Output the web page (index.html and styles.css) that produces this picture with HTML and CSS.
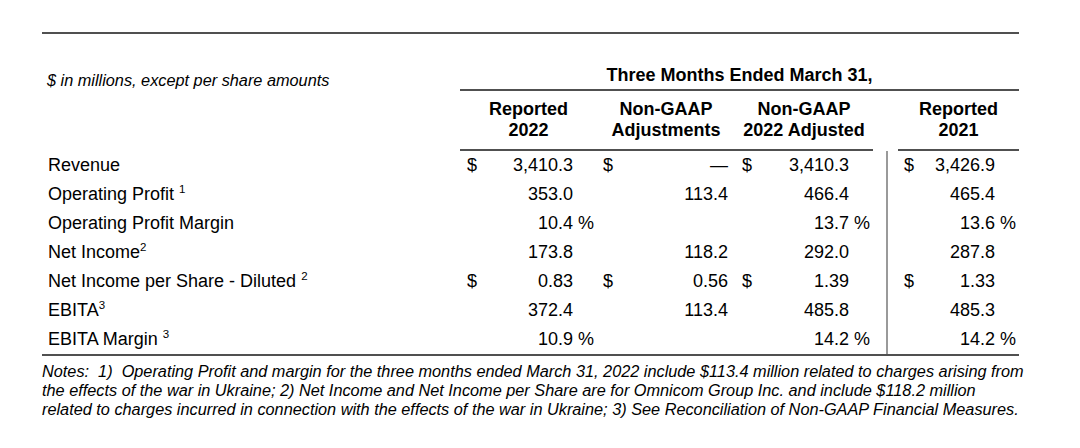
FILE: index.html
```html
<!DOCTYPE html>
<html>
<head>
<meta charset="utf-8">
<link rel="stylesheet" href="styles.css">
</head>
<body>
<div class="page">
  <div class="rule-top"></div>
  <div class="fin">
    <div class="units">$ in millions, except per share amounts</div>
    <div class="period">Three Months Ended March 31,</div>

    <div class="blank"></div>
    <div class="colhead">Reported<br>2022</div>
    <div class="colhead">Non-GAAP<br>Adjustments</div>
    <div class="colhead">Non-GAAP<br>2022 Adjusted</div>
    <div class="blank"></div>
    <div class="colhead last">Reported<br>2021</div>

    <div class="label">Revenue</div>
    <div class="num c1"><span class="cur">$</span><span class="val">3,410.3</span><span class="suf"></span></div>
    <div class="num c2"><span class="cur">$</span><span class="val">—</span><span class="suf"></span></div>
    <div class="num c3"><span class="cur">$</span><span class="val">3,410.3</span><span class="suf"></span></div>
    <div class="gap"></div>
    <div class="num c4"><span class="cur">$</span><span class="val">3,426.9</span><span class="suf"></span></div>

    <div class="label">Operating Profit <sup>1</sup></div>
    <div class="num c1"><span class="val">353.0</span><span class="suf"></span></div>
    <div class="num c2"><span class="val">113.4</span><span class="suf"></span></div>
    <div class="num c3"><span class="val">466.4</span><span class="suf"></span></div>
    <div class="gap"></div>
    <div class="num c4"><span class="val">465.4</span><span class="suf"></span></div>

    <div class="label">Operating Profit Margin</div>
    <div class="num c1"><span class="val">10.4</span><span class="suf">%</span></div>
    <div class="num c2"><span class="val"></span><span class="suf"></span></div>
    <div class="num c3"><span class="val">13.7</span><span class="suf">%</span></div>
    <div class="gap"></div>
    <div class="num c4"><span class="val">13.6</span><span class="suf">%</span></div>

    <div class="label">Net Income<sup>2</sup></div>
    <div class="num c1"><span class="val">173.8</span><span class="suf"></span></div>
    <div class="num c2"><span class="val">118.2</span><span class="suf"></span></div>
    <div class="num c3"><span class="val">292.0</span><span class="suf"></span></div>
    <div class="gap"></div>
    <div class="num c4"><span class="val">287.8</span><span class="suf"></span></div>

    <div class="label">Net Income per Share - Diluted <sup>2</sup></div>
    <div class="num c1"><span class="cur">$</span><span class="val">0.83</span><span class="suf"></span></div>
    <div class="num c2"><span class="cur">$</span><span class="val">0.56</span><span class="suf"></span></div>
    <div class="num c3"><span class="cur">$</span><span class="val">1.39</span><span class="suf"></span></div>
    <div class="gap"></div>
    <div class="num c4"><span class="cur">$</span><span class="val">1.33</span><span class="suf"></span></div>

    <div class="label">EBITA<sup>3</sup></div>
    <div class="num c1"><span class="val">372.4</span><span class="suf"></span></div>
    <div class="num c2"><span class="val">113.4</span><span class="suf"></span></div>
    <div class="num c3"><span class="val">485.8</span><span class="suf"></span></div>
    <div class="gap"></div>
    <div class="num c4"><span class="val">485.3</span><span class="suf"></span></div>

    <div class="label">EBITA Margin <sup>3</sup></div>
    <div class="num c1"><span class="val">10.9</span><span class="suf">%</span></div>
    <div class="num c2"><span class="val"></span><span class="suf"></span></div>
    <div class="num c3"><span class="val">14.2</span><span class="suf">%</span></div>
    <div class="gap"></div>
    <div class="num c4"><span class="val">14.2</span><span class="suf">%</span></div>
  </div>
  <div class="rule-bottom"></div>
  <p class="notes">Notes:&nbsp; 1)&nbsp; Operating Profit and margin for the three months ended March 31, 2022 include $113.4 million related to charges arising from the effects of the war in Ukraine; 2) Net Income and Net Income per Share are for Omnicom Group Inc. and include $118.2 million related to charges incurred in connection with the effects of the war in Ukraine; 3) See Reconciliation of Non-GAAP Financial Measures.</p>
</div>
</body>
</html>
```
FILE: styles.css
```css
* { box-sizing: border-box; }

html, body {
  margin: 0;
  padding: 0;
  background: #ffffff;
}

body {
  font-family: "Liberation Sans", Arial, sans-serif;
  color: #000;
  width: 1080px;
  height: 448px;
  overflow: hidden;
}

.page {
  padding-left: 42px;
  padding-top: 32px;
  width: 1019px;
}

.rule-top {
  height: 2px;
  background: #505050;
}

.fin {
  display: grid;
  grid-template-columns: 418px 137px 138px 138px 13px 133px;
  margin-top: 30px;
  font-size: 18px;
}

.units {
  font-style: italic;
  font-size: 16.3px;
  line-height: 22px;
  padding-left: 5px;
  padding-top: 5px;
}

.period {
  grid-column: 2 / 7;
  text-align: center;
  font-weight: bold;
  line-height: 22px;
  padding-bottom: 3px;
  border-bottom: 2px solid #505050;
}

.colhead {
  font-weight: bold;
  text-align: center;
  line-height: 21px;
  padding-top: 8px;
  padding-bottom: 8px;
  border-bottom: 2px solid #505050;
}

.colhead.last {
  margin-left: 12px;
}

.label {
  height: 29px;
  line-height: 29px;
  padding-left: 6px;
  white-space: nowrap;
}

.label sup {
  font-size: 11.5px;
  vertical-align: 7px;
  line-height: 0;
}

.num {
  display: flex;
  height: 29px;
  line-height: 29px;
  white-space: nowrap;
}

.num .val {
  margin-left: auto;
  text-align: right;
}

.num .suf {
  width: 24px;
  padding-left: 5px;
}

.c1 { padding-left: 7px; }
.c2 { padding-left: 6px; }
.c2 .suf { width: 7px; }
.c3 { padding-left: 7px; }
.c4 {
  padding-left: 16px;
  border-left: 2px solid #9a9a9a;
}

.rule-bottom {
  height: 2px;
  background: #505050;
}

.notes {
  margin: 6px 0 0 0;
  font-style: italic;
  font-size: 16.3px;
  line-height: 19px;
  width: 984px;
}
```
